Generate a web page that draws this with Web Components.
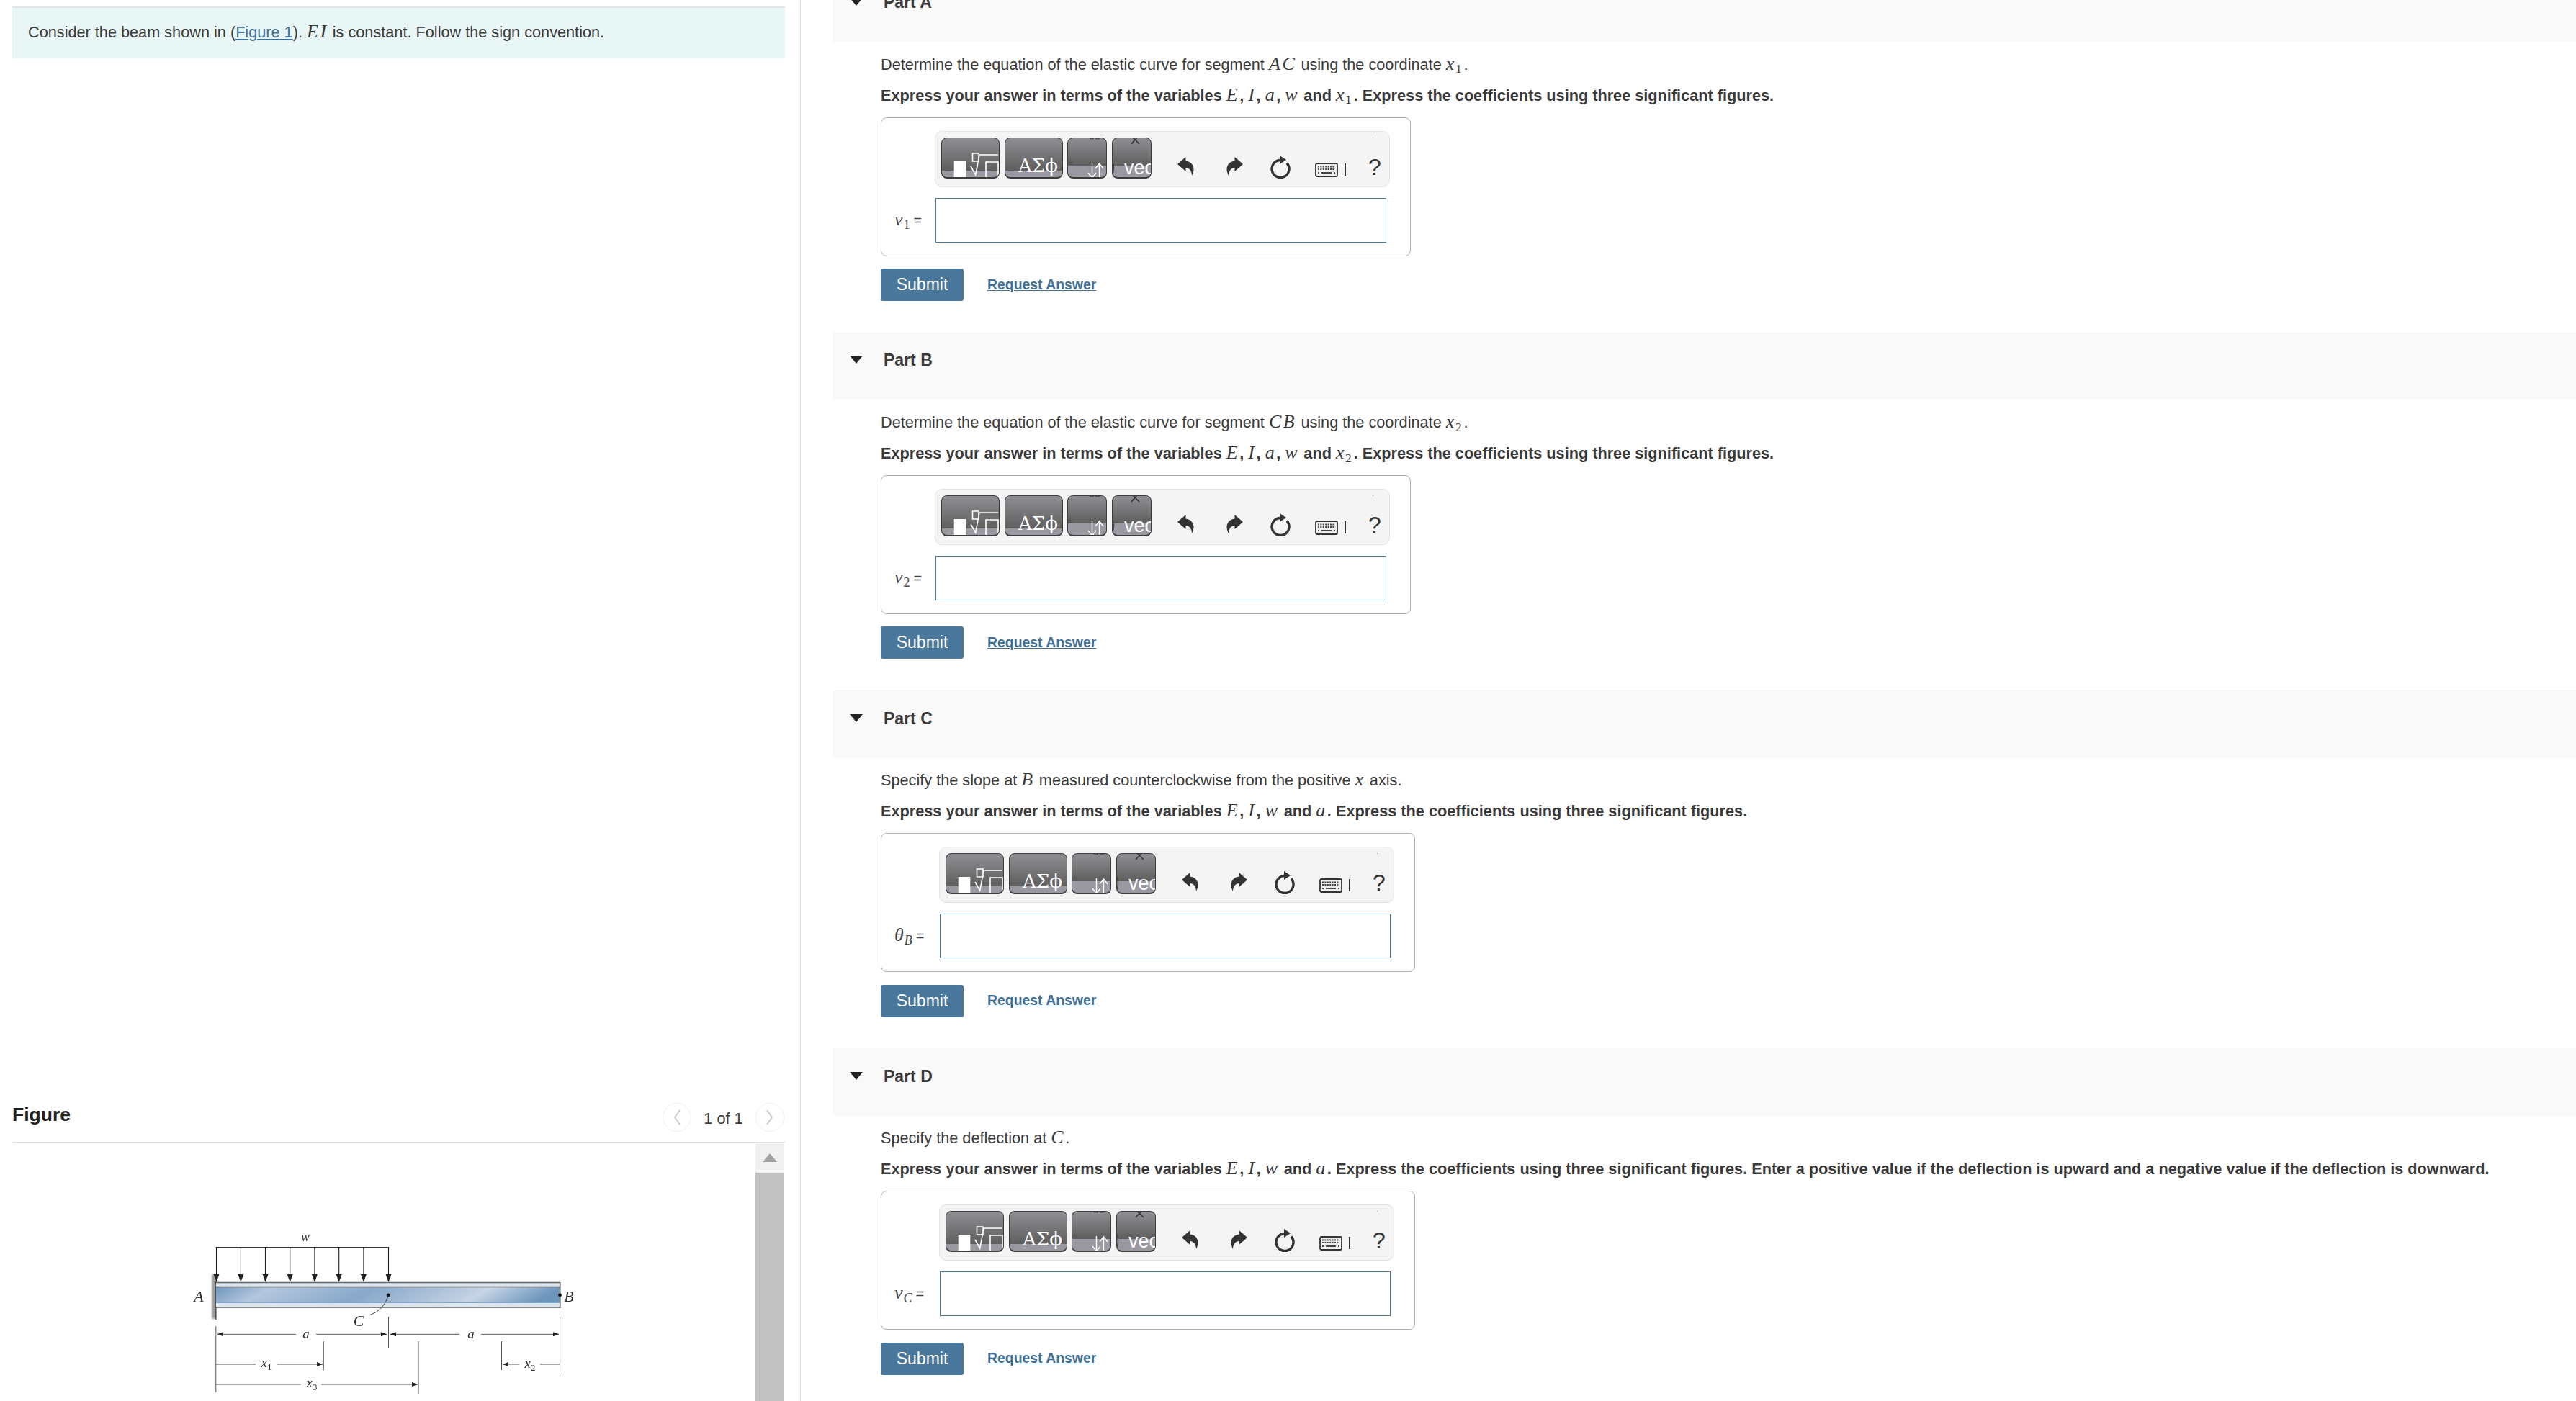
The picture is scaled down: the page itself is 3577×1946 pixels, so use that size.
<!DOCTYPE html>
<html lang="en">
<head>
<meta charset="utf-8">
<title>Beam</title>
<style>
  html, body { margin: 0; height: 100%; background: #fff; }
  body { font: 21.7px/30px "Liberation Sans", Arial, sans-serif; color: #3a3a3a; overflow: hidden; }
  b-page { height: 1946px; }
</style>
</head>
<body>
<b-page>
  <b-note slot="note">Consider the beam shown in (<a>Figure 1</a>). <m-v>EI</m-v> is constant. Follow the sign convention.</b-note>
  <b-figure slot="figure"></b-figure>

  <b-part slot="parts" name="Part A" label="v" sub="1">
    <span slot="desc">Determine the equation of the elastic curve for segment <m-v>AC</m-v> using the coordinate <m-v sub="1">x</m-v>.</span>
    <span slot="ask">Express your answer in terms of the variables <m-v>E</m-v>, <m-v>I</m-v>, <m-v>a</m-v>, <m-v>w</m-v> and <m-v sub="1">x</m-v>. Express the coefficients using three significant figures.</span>
  </b-part>
  <b-part slot="parts" name="Part B" label="v" sub="2">
    <span slot="desc">Determine the equation of the elastic curve for segment <m-v>CB</m-v> using the coordinate <m-v sub="2">x</m-v>.</span>
    <span slot="ask">Express your answer in terms of the variables <m-v>E</m-v>, <m-v>I</m-v>, <m-v>a</m-v>, <m-v>w</m-v> and <m-v sub="2">x</m-v>. Express the coefficients using three significant figures.</span>
  </b-part>
  <b-part slot="parts" name="Part C" label="θ" sub="B">
    <span slot="desc">Specify the slope at <m-v>B</m-v> measured counterclockwise from the positive <m-v>x</m-v> axis.</span>
    <span slot="ask">Express your answer in terms of the variables <m-v>E</m-v>, <m-v>I</m-v>, <m-v>w</m-v> and <m-v>a</m-v>. Express the coefficients using three significant figures.</span>
  </b-part>
  <b-part slot="parts" name="Part D" label="v" sub="C">
    <span slot="desc">Specify the deflection at <m-v>C</m-v>.</span>
    <span slot="ask">Express your answer in terms of the variables <m-v>E</m-v>, <m-v>I</m-v>, <m-v>w</m-v> and <m-v>a</m-v>. Express the coefficients using three significant figures. Enter a positive value if the deflection is upward and a negative value if the deflection is downward.</span>
  </b-part>
</b-page>

<script>
// math variable, serif italic with optional subscript
class MathVar extends HTMLElement {
  constructor() {
    super();
    const sub = this.getAttribute('sub');
    this.attachShadow({ mode: 'open' }).innerHTML = `
      <style>
        :host { display: inline; font-family: "Liberation Serif", "Times New Roman", serif; font-weight: 400; }
        i { font-size: 1.2em; letter-spacing: .1em; }
        sub { font-size: .8em; line-height: 0; vertical-align: -.28em; letter-spacing: 0; margin-left: -1px; margin-right: 3px; }
      </style>
      <i><slot></slot></i>${sub ? `<sub>${sub}</sub>` : ''}`;
  }
}

class PageLayout extends HTMLElement {
  constructor() {
    super();
    this.attachShadow({ mode: 'open' }).innerHTML = `
      <style>
        :host { display: flex; width: 100%; overflow: hidden; }
        .left { width: 1111px; height: 100%; flex: none; box-sizing: content-box; border-right: 1px solid #ddd; display: flex; flex-direction: column; }
        .right { flex: 1; margin-left: 44px; margin-top: -36px; min-width: 0; }
      </style>
      <div class="left"><slot name="note"></slot><slot name="figure"></slot></div>
      <div class="right"><slot name="parts"></slot></div>`;
  }
}

class NoteBox extends HTMLElement {
  constructor() {
    super();
    this.attachShadow({ mode: 'open' }).innerHTML = `
      <style>
        :host { display: block; margin: 9px 0 0 17px; width: 1073px; box-sizing: border-box; height: 72px; background: #e9f6f6; border-top: 2px solid #dfe6e6; padding: 18px 22px; }
        ::slotted(a) { color: #3f7097; text-decoration: underline; }
      </style>
      <slot></slot>`;
  }
}

const beamDrawing = `
  <svg width="570" height="256" viewBox="0 0 570 256" xmlns="http://www.w3.org/2000/svg">
    <defs>
      <linearGradient id="web" x1="0" x2="1" y1="0" y2="0.08">
        <stop offset="0" stop-color="#6f97bd"/><stop offset=".16" stop-color="#b3c6dd"/>
        <stop offset=".46" stop-color="#88a8ca"/><stop offset=".8" stop-color="#c6d4e5"/>
        <stop offset="1" stop-color="#6d96bd"/>
      </linearGradient>
      <filter id="soft"><feGaussianBlur stdDeviation=".45"/></filter>
      <filter id="wallblur"><feGaussianBlur stdDeviation="1.4"/></filter>
      <marker id="h" viewBox="0 0 8 6" refX="8" refY="3" markerWidth="8" markerHeight="6" orient="auto-start-reverse" markerUnits="userSpaceOnUse"><path d="M0 0L8 3L0 6Z" fill="#222"/></marker>
    </defs>
    <g filter="url(#soft)">
      <rect x="44" y="80" width="6" height="62" fill="#9a9a9a" filter="url(#wallblur)"/>
      <path d="M49.8 90V143" stroke="#333" stroke-width="1.2"/>
      <rect x="50" y="91" width="478" height="36" fill="#dde5ef"/>
      <rect x="50" y="97.5" width="478" height="22" fill="url(#web)"/>
      <path d="M50 119.5H528" stroke="#7fa6cb" stroke-width="1"/>
      <path d="M50 91.5H528M50 97.5H528M50 126H528" stroke="#666" stroke-width="1.6"/>
      <path d="M527.8 91V127" stroke="#555" stroke-width="1.4"/>
      <path d="M49.8 42.5H289.8" stroke="#333" stroke-width="1"/>
      <g stroke="#222" stroke-width="1.1" fill="#222">
        <path d="M50.5 42.5V82M84.4 42.5V82M118.5 42.5V82M152.7 42.5V82M186.9 42.5V82M220.7 42.5V82M254.9 42.5V82M289.5 42.5V82"/>
        <path stroke="none" d="M46.5 80h8l-4 11zM80.4 80h8l-4 11zM114.5 80h8l-4 11zM148.7 80h8l-4 11zM182.9 80h8l-4 11zM216.7 80h8l-4 11zM250.9 80h8l-4 11zM285.5 80h8l-4 11z"/>
      </g>
      <circle cx="289" cy="109" r="2.4" fill="#111"/>
      <circle cx="527.5" cy="109" r="2.4" fill="#111"/>
      <path d="M289 110C284 125 275 133 262 137" fill="none" stroke="#444" stroke-width="1"/>
      <g stroke="#555" stroke-width="1" fill="none">
        <path d="M49.8 152V244M289.5 139V182M527.6 139V215M199.3 173V213M331 173V246M446.5 173V213"/>
        <path d="M161 163.3H52" marker-end="url(#h)"/><path d="M189 163.3H287" marker-end="url(#h)"/>
        <path d="M388 163.3H292" marker-end="url(#h)"/><path d="M418 163.3H526" marker-end="url(#h)"/>
        <path d="M50 205H105"/><path d="M134.5 205H198" marker-end="url(#h)"/>
        <path d="M471 205H448" marker-end="url(#h)"/><path d="M500 205H527"/>
        <path d="M50 233H168"/><path d="M196 233H330" marker-end="url(#h)"/>
      </g>
      <g font-family="Liberation Serif, serif" font-style="italic" fill="#333" text-anchor="middle">
        <text x="174" y="34" font-size="18">w</text>
        <text x="26" y="118" font-size="22">A</text>
        <text x="540" y="118" font-size="22">B</text>
        <text x="248" y="152" font-size="22">C</text>
        <text x="175" y="169" font-size="19">a</text>
        <text x="404" y="169" font-size="19">a</text>
        <text x="120" y="209" font-size="19">x<tspan font-style="normal" font-size="13" dy="4">1</tspan></text>
        <text x="486" y="210" font-size="19">x<tspan font-style="normal" font-size="13" dy="4">2</tspan></text>
        <text x="183" y="237" font-size="19">x<tspan font-style="normal" font-size="13" dy="4">3</tspan></text>
      </g>
    </g>
  </svg>`;

class FigurePanel extends HTMLElement {
  constructor() {
    super();
    this.attachShadow({ mode: 'open' }).innerHTML = `
      <style>
        :host { display: flex; flex-direction: column; margin: auto 0 0 17px; width: 1073px; height: 414px; }
        .head { flex: none; height: 54px; box-sizing: content-box; display: flex; align-items: flex-start; border-bottom: 1px solid #dde0e4; padding-right: 1px; }
        h2 { margin: 0; font-size: 26.5px; line-height: 32px; color: #222; flex: 1; }
        .circle { width: 38px; height: 38px; border: 1px solid #eee; border-radius: 50%; display: flex; align-items: center; justify-content: center; }
        .count { width: 89px; text-align: center; line-height: 44px; color: #3a3a3a; margin: 0; }
        .body { flex: 1; display: flex; overflow: hidden; min-height: 0; }
        .img { flex: 1; padding: 103px 0 0 233px; }
        .img svg { display: block; }
        .track { flex: none; width: 39px; margin-right: 2px; background: #c1c1c1; }
        .track div { height: 42px; background: #f1f1f1; display: flex; justify-content: center; padding-top: 15px; box-sizing: border-box; }
      </style>
      <div class="head">
        <h2>Figure</h2>
        <div class="circle"><svg width="12" height="22" viewBox="0 0 12 22"><path d="M10 1L3 11L10 21" fill="none" stroke="#c4c4c4" stroke-width="1.6"/></svg></div>
        <div class="count">1 of 1</div>
        <div class="circle"><svg width="12" height="22" viewBox="0 0 12 22"><path d="M2 1L9 11L2 21" fill="none" stroke="#c4c4c4" stroke-width="1.6"/></svg></div>
      </div>
      <div class="body">
        <div class="img">${beamDrawing}</div>
        <div class="track"><div><svg width="20" height="12"><path d="M10 0L20 12H0Z" fill="#a3a3a3"/></svg></div></div>
      </div>`;
  }
}

// the four clipped sprite buttons of the equation editor
const sprites = {
  templates: `<rect x="17.7" y="33" width="16.6" height="24" fill="#fff"/>
    <path d="M43.5 22H52V33H43.5ZM41 40L47.7 52L53 24H79M62 34H79V56H62Z" fill="none" stroke="#fff" stroke-width="1.6"/>`,
  symbols: `<text x="19" y="48" font-family="DejaVu Serif, serif" font-size="26" fill="#fff">ΑΣϕ</text>`,
  arrows: `<path d="M34.5 35V56M29 49L34.5 56L40 49M44.5 57V36M39 43L44.5 36L50 43" fill="none" stroke="#fff" stroke-width="1.4"/>
    <text x="0" y="45" font-family="Liberation Sans, sans-serif" font-size="20" fill="#555">*</text>
    <path d="M31 0a3 2 0 0 0 6 0M39 0a3 2 0 0 0 6 0" fill="none" stroke="#444" stroke-width="1.2"/>`,
  vec: `<text x="17" y="50.5" font-family="Liberation Sans, sans-serif" font-size="27" fill="#fff">vec</text>
    <path d="M29 0L38 9M35 0L27 9" fill="none" stroke="#333" stroke-width="1.6"/>
    <path d="M0 31Q5 42 0 53" fill="none" stroke="#444" stroke-width="1.6"/>`,
};

class ToolButton extends HTMLElement {
  constructor() {
    super();
    const kind = this.getAttribute('kind');
    const w = +this.getAttribute('w');
    const band = w > 60 ? 9 : 16;
    this.attachShadow({ mode: 'open' }).innerHTML = `
      <style>
        :host { display: block; flex: none; width: ${w}px; height: 57px; box-sizing: border-box; border: 1px solid #3c3c3c; border-bottom-width: 2px; border-radius: 8px; overflow: hidden;
          background: linear-gradient(#8f8e93 0, #5e5e5e calc(100% - ${band}px), #9a99a2 calc(100% - ${band}px)); }
        svg { display: block; margin: -1px; }
      </style>
      <svg width="${w}" height="57" viewBox="0 0 ${w} 57">${sprites[kind]}</svg>`;
  }
}

class EditorToolbar extends HTMLElement {
  constructor() {
    super();
    this.attachShadow({ mode: 'open' }).innerHTML = `
      <style>
        :host { display: flex; align-items: flex-start; width: 632px; height: 78px; box-sizing: border-box; margin-left: -1px; padding: 8px 0 0 8px; background: #f4f4f4; border: 1px solid #e3e3e3; border-radius: 10px; position: relative; }
        .gap2 { margin-left: 7px; } .gap1 { margin-left: 6px; }
        svg { flex: none; display: block; }
        .help { font-size: 32px; line-height: 38px; color: #333; margin: 22px 0 0 31px; width: 18px; }
        .dot { position: absolute; left: 607px; top: 8px; width: 1px; height: 1px; background: #999; }
      </style>
      <tool-button kind="templates" w="81"></tool-button>
      <tool-button class="gap2" kind="symbols" w="81"></tool-button>
      <tool-button class="gap1" kind="arrows" w="55"></tool-button>
      <tool-button class="gap2" kind="vec" w="55"></tool-button>
      <svg style="margin:27px 0 0 36px" width="23" height="27" viewBox="0 0 23 27"><path d="M0 10L11.5 0V5.5C18 6 22.5 11 22.5 17C22.5 20 21.5 23 20 26C20 20 17 15 11.5 15V20Z" fill="#333"/></svg>
      <svg style="margin:27px 0 0 45px" width="23" height="27" viewBox="0 0 23 27"><path transform="matrix(-1 0 0 1 23 0)" d="M0 10L11.5 0V5.5C18 6 22.5 11 22.5 17C22.5 20 21.5 23 20 26C20 20 17 15 11.5 15V20Z" fill="#333"/></svg>
      <svg style="margin:25px 0 0 38px" width="28" height="32" viewBox="0 0 28 32"><path d="M13 6.5A12 12 0 1 0 23 10.5" fill="none" stroke="#333" stroke-width="3.4"/><path d="M13 0L22 6L13 12Z" fill="#333"/></svg>
      <svg style="margin:35px 0 0 34px" width="32" height="20" viewBox="0 0 32 20"><rect x="1" y="1" width="30" height="18" rx="2" fill="#eee" stroke="#333" stroke-width="1.8"/><path d="M4 5.5H28M4 9H28" stroke="#444" stroke-width="2" stroke-dasharray="2 1.4"/><path d="M4 14H6M9 14H23M26 14H28" stroke="#444" stroke-width="2"/></svg>
      <svg style="margin:36px 0 0 9px" width="2" height="17"><rect width="2" height="17" fill="#333"/></svg>
      <div class="help">?</div>
      <div class="dot"></div>`;
  }
}

class AnswerBox extends HTMLElement {
  constructor() {
    super();
    const sub = this.getAttribute('sub');
    const wide = sub !== '1' && sub !== '2';
    this.attachShadow({ mode: 'open' }).innerHTML = `
      <style>
        :host { display: inline-flex; align-items: flex-end; height: 193px; box-sizing: border-box; border: 1px solid #b0b0b0; border-radius: 8px; padding: 18px 27px 18px 18px; background: #fff; }
        .label { flex: none; white-space: nowrap; width: ${wide ? 48 : 43}px; margin-right: ${wide ? 15 : 14}px; height: 62px; line-height: 62px; color: #444; font-size: 20px; }
        .label i { font: italic 26px "Liberation Serif", serif; letter-spacing: 1px; }
        .label sub { font: ${wide ? 'italic ' : ''}18px "Liberation Serif", serif; line-height: 0; vertical-align: -5px; margin-right: 5px; }
        .col { display: flex; flex-direction: column; gap: 15px; width: 632px; }
        .input { width: 626px; height: 62px; box-sizing: border-box; border: 1.5px solid #4a7a9c; background: #fff; }
      </style>
      <div class="label"><i>${this.getAttribute('label')}</i><sub>${sub}</sub>=</div>
      <div class="col"><editor-toolbar></editor-toolbar><div class="input"></div></div>`;
  }
}

class ProblemPart extends HTMLElement {
  constructor() {
    super();
    this.attachShadow({ mode: 'open' }).innerHTML = `
      <style>
        :host { display: block; height: 497.33px; }
        header { height: 94px; background: #f9f9f9; display: flex; padding-left: 24px; box-sizing: border-box; }
        header svg { margin-top: 33px; flex: none; }
        h3 { margin: 24px 0 0 29px; font-size: 23px; line-height: 30px; font-weight: 700; color: #3a3a3a; }
        .content { padding-left: 67px; }
        p { margin: 15.5px 0 0; height: 30px; white-space: nowrap; }
        p.ask { margin-top: 13px; font-weight: 700; }
        answer-box { margin-top: 16px; vertical-align: top; }
        .actions { display: flex; align-items: center; margin-top: 17.5px; gap: 33px; }
        .submit { width: 115px; height: 45px; border-radius: 3px; background: #4a789c; color: #fff; font-size: 23px; line-height: 45px; text-align: center; }
        .req { color: #3f7097; font-size: 19.4px; font-weight: 700; text-decoration: underline; margin-top: -2px; }
      </style>
      <header>
        <svg width="18" height="11" viewBox="0 0 18 11"><path d="M0 0H18L9 11Z" fill="#222"/></svg>
        <h3>${this.getAttribute('name')}</h3>
      </header>
      <div class="content">
        <p><slot name="desc"></slot></p>
        <p class="ask"><slot name="ask"></slot></p>
        <answer-box label="${this.getAttribute('label')}" sub="${this.getAttribute('sub')}"></answer-box>
        <div class="actions"><div class="submit">Submit</div><div class="req">Request Answer</div></div>
      </div>`;
  }
}

customElements.define('m-v', MathVar);
customElements.define('b-page', PageLayout);
customElements.define('b-note', NoteBox);
customElements.define('b-figure', FigurePanel);
customElements.define('tool-button', ToolButton);
customElements.define('editor-toolbar', EditorToolbar);
customElements.define('answer-box', AnswerBox);
customElements.define('b-part', ProblemPart);
</script>
</body>
</html>
